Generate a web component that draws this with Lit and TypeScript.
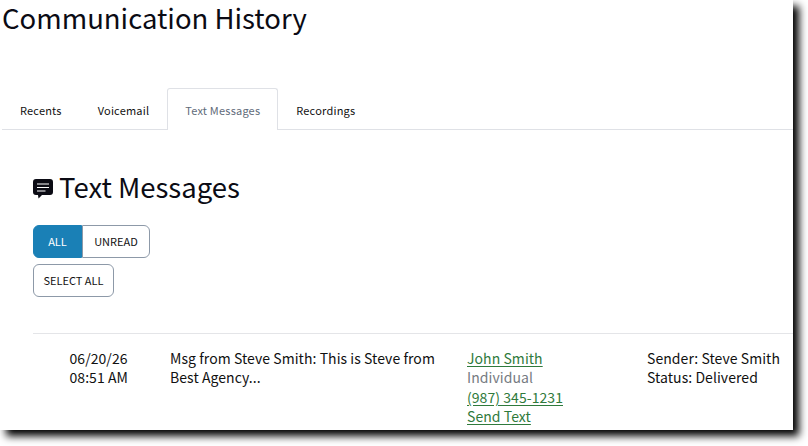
import { LitElement, html, css } from "lit";
import { customElement } from "lit/decorators.js";

@customElement("app-root")
export class AppRoot extends LitElement {
  static styles = css`
    :host { display: block; width: 808px; height: 446px; background: #fff; font-family: "Noto Sans CJK SC", "Noto Sans", sans-serif; color: #111; }
    .frame { width: 793px; height: 430px; background: #fff; box-shadow: 6px 6px 8px #000; box-sizing: border-box; padding-left: 2px; }
    h1 { margin: 0; font-size: 27.5px; font-weight: 400; line-height: 34px; height: 88px; color: #0b0b14; }
    .tabs { display: flex; height: 42px; border-bottom: 1px solid #dfe1e6; box-sizing: border-box; }
    .tab { font-size: 11px; letter-spacing: 0.2px; line-height: 18px; padding: 13px 18px 0; box-sizing: border-box; }
    .tab.active { margin-bottom: -1px; height: 42px; background: #fff; color: #5f6b7a; border: 1px solid #dfe1e6; border-bottom: 0; border-radius: 3px 3px 0 0; padding: 12px 17px 0; }
    .content { padding: 38px 0 0 31px; }
    h2 { margin: 0; font-size: 27.5px; font-weight: 400; line-height: 36px; display: flex; align-items: center; gap: 6px; color: #0b0b14; }
    h2 svg { display: block; width: 20px; height: 20px; flex: none; margin-top: 6px; }
    .group { display: flex; margin-top: 21px; }
    .btn { box-sizing: border-box; height: 33px; font-size: 11px; line-height: 31px; border: 1px solid #8d99a8; background: #fff; text-align: center; font-weight: 400; }
    .all { width: 49px; background: #1a80b6; border-color: #1a80b6; color: #fff; border-radius: 6px 0 0 6px; }
    .unread { width: 68px; border-radius: 0 6px 6px 0; }
    .select { width: 81px; border-radius: 6px; margin-top: 6px; }
    .row { margin-top: 36px; border-top: 1px solid #e4e5e8; padding-top: 15px; display: grid; grid-template-columns: 137px 297px 180px auto; font-size: 14px; line-height: 19.3px; letter-spacing: 0.06px; }
    .date { padding-left: 36.5px; }
    .msg { width: 280px; }
    a { display: block; color: #2f7a3c; text-decoration: underline; text-underline-offset: 2px; }
    .muted { color: #767b82; }
  `;
  render() {
    return html`<div class="frame">
      <h1>Communication History</h1>
      <div class="tabs">
        <div class="tab">Recents</div>
        <div class="tab">Voicemail</div>
        <div class="tab active">Text Messages</div>
        <div class="tab">Recordings</div>
      </div>
      <div class="content">
        <h2><svg viewBox="0 0 20 20"><path fill="#0b0b14" d="M3 0h14a3 3 0 0 1 3 3v10a3 3 0 0 1-3 3H9l-3.500 3.500L5 16H3a3 3 0 0 1-3-3V3a3 3 0 0 1 3-3z"/><path fill="#fff" d="M4 4.500h12v1.100H4zM4 8h12v1.100H4zM4 11.500h8.500v1.100H4z"/></svg>Text Messages</h2>
        <div class="group"><div class="btn all">ALL</div><div class="btn unread">UNREAD</div></div>
        <div class="btn select">SELECT ALL</div>
        <div class="row">
          <div class="date">06/20/26<br />08:51 AM</div>
          <div class="msg">Msg from Steve Smith: This is Steve from Best Agency...</div>
          <div><a>John Smith</a><div class="muted">Individual</div><a>(987) 345-1231</a><a>Send Text</a></div>
          <div>Sender: Steve Smith<br />Status: Delivered</div>
        </div>
      </div>
    </div>`;
  }
}
